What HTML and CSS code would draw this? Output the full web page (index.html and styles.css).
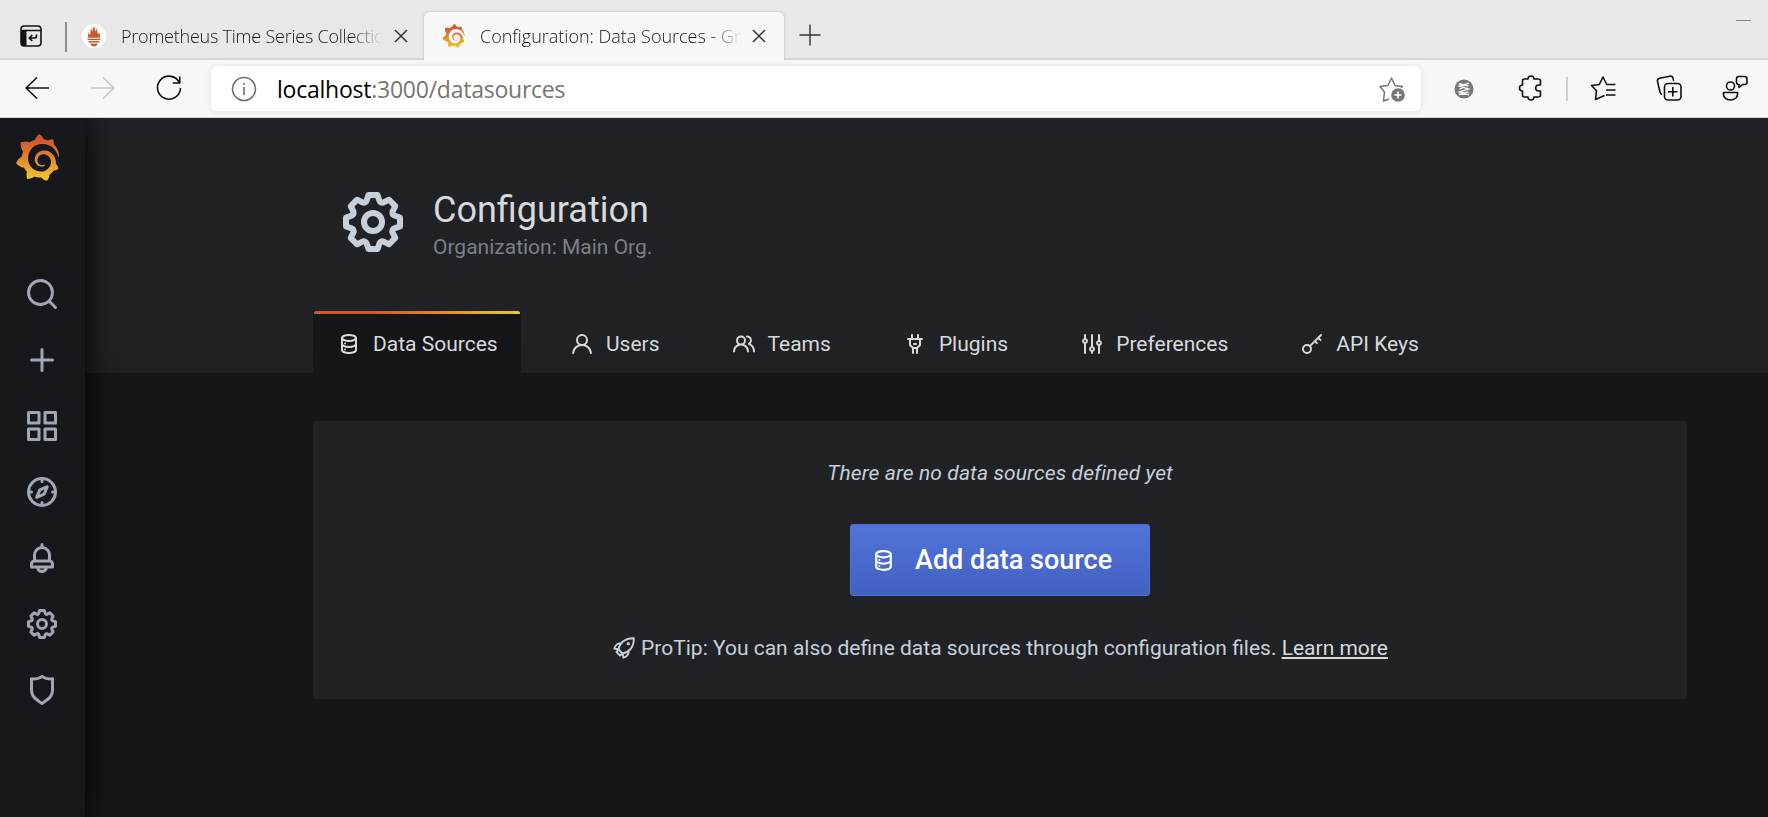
FILE: index.html
```html
<!DOCTYPE html>
<html lang="en">
<head>
<meta charset="utf-8">
<title>Configuration: Data Sources - Grafana</title>
<link rel="stylesheet" href="styles.css">
</head>
<body>
<svg class="defs" aria-hidden="true">
  <defs>
    <linearGradient id="flame" x1="0" y1="1" x2="0" y2="0">
      <stop offset="0" stop-color="#f2cc2e"/><stop offset=".12" stop-color="#efba30"/><stop offset=".5" stop-color="#de8431"/><stop offset=".85" stop-color="#d2592f"/><stop offset="1" stop-color="#d2592f"/>
    </linearGradient>
    <symbol id="grafana" viewBox="0 0 351 365"><path fill="url(#flame)" d="M342,161.2c-0.6-6.1-1.6-13.1-3.6-20.9c-2-7.7-5-16.2-9.4-25c-4.4-8.8-10.1-17.9-17.5-26.8c-2.9-3.5-6.1-6.9-9.5-10.2c5.1-20.3-6.2-37.9-6.2-37.9c-19.5-1.2-31.9,6.1-36.5,9.4c-0.8-0.3-1.5-0.7-2.3-1c-3.3-1.3-6.7-2.6-10.3-3.7c-3.5-1.1-7.1-2.1-10.8-3c-3.7-0.9-7.4-1.6-11.2-2.2c-0.7-0.1-1.3-0.2-2-0.3c-8.5-27.2-32.9-38.6-32.9-38.6c-27.3,17.3-32.4,41.5-32.4,41.5s-0.1,0.5-0.3,1.4c-1.5,0.4-3,0.9-4.5,1.3c-2.1,0.6-4.2,1.4-6.2,2.2c-2.1,0.8-4.1,1.6-6.2,2.5c-4.1,1.8-8.2,3.8-12.2,6c-3.9,2.2-7.7,4.6-11.4,7.1c-0.5-0.2-1-0.4-1-0.4c-37.8-14.4-71.3,2.9-71.3,2.9c-3.1,40.2,15.1,65.5,18.7,70.1c-0.9,2.5-1.7,5-2.5,7.5c-2.8,9.1-4.9,18.4-6.2,28.1c-0.2,1.4-0.4,2.8-0.5,4.2C18.8,192.7,8.5,228,8.5,228c29.1,33.5,63.1,35.6,63.1,35.6c0,0,0.1-0.1,0.1-0.1c4.3,7.7,9.3,15,14.9,21.9c2.4,2.9,4.8,5.6,7.4,8.3c-10.6,30.4,1.5,55.6,1.5,55.6c32.4,1.2,53.7-14.2,58.2-17.7c3.2,1.1,6.5,2.1,9.8,2.9c10,2.6,20.2,4.1,30.4,4.5c2.5,0.1,5.1,0.2,7.6,0.1l1.2,0l0.8,0l1.6,0l1.6-0.1l0,0.1c15.3,21.8,42.1,24.9,42.1,24.9c19.1-20.1,20.2-40.1,20.2-44.4l0,0c0,0,0-0.1,0-0.3c0-0.4,0-0.6,0-0.6l0,0c0-0.3,0-0.6,0-0.9c4-2.8,7.8-5.8,11.4-9.1c7.6-6.9,14.3-14.8,19.9-23.3c0.5-0.8,1-1.6,1.5-2.4c21.6,1.2,36.9-13.4,36.9-13.4c-3.6-22.5-16.4-33.5-19.1-35.6l0,0c0,0-0.1-0.1-0.3-0.2c-0.2-0.1-0.2-0.2-0.2-0.2c0,0,0,0,0,0c-0.1-0.1-0.3-0.2-0.5-0.3c0.1-1.4,0.2-2.7,0.3-4.1c0.2-2.4,0.2-4.9,0.2-7.3l0-1.8l0-0.9l0-0.5c0-0.6,0-0.4,0-0.6l-0.1-1.5l-0.1-2c0-0.7-0.1-1.3-0.2-1.9c-0.1-0.6-0.1-1.3-0.2-1.9l-0.2-1.9l-0.3-1.9c-0.4-2.5-0.8-4.9-1.4-7.4c-2.3-9.7-6.1-18.9-11-27.2c-5-8.3-11.2-15.6-18.3-21.8c-7-6.2-14.9-11.2-23.1-14.9c-8.3-3.7-16.9-6.1-25.5-7.2c-4.3-0.6-8.6-0.8-12.9-0.7l-1.6,0l-0.4,0c-0.1,0-0.6,0-0.5,0l-0.7,0l-1.6,0.1c-0.6,0-1.2,0.1-1.7,0.1c-2.2,0.2-4.4,0.5-6.5,0.9c-8.6,1.6-16.7,4.7-23.8,9c-7.1,4.3-13.3,9.6-18.3,15.6c-5,6-8.9,12.7-11.6,19.6c-2.7,6.9-4.2,14.1-4.6,21c-0.1,1.7-0.1,3.5-0.1,5.2c0,0.4,0,0.9,0,1.3l0.1,1.4c0.1,0.8,0.1,1.7,0.2,2.5c0.3,3.5,1,6.9,1.9,10.1c1.9,6.5,4.9,12.4,8.6,17.4c3.7,5,8.2,9.1,12.9,12.4c4.7,3.2,9.8,5.5,14.8,7c5,1.5,10,2.1,14.7,2.1c0.6,0,1.2,0,1.7,0c0.3,0,0.6,0,0.9,0c0.3,0,0.6,0,0.9-0.1c0.5,0,1-0.1,1.5-0.1c0.1,0,0.3,0,0.4-0.1l0.5-0.1c0.3,0,0.6-0.1,0.9-0.1c0.6-0.1,1.1-0.2,1.7-0.3c0.6-0.1,1.1-0.2,1.6-0.4c1.1-0.2,2.1-0.6,3.1-0.9c2-0.7,4-1.5,5.7-2.4c1.8-0.9,3.4-2,5-3c0.4-0.3,0.9-0.6,1.3-1c1.6-1.3,1.9-3.7,0.6-5.3c-1.1-1.4-3.1-1.8-4.7-0.9c-0.4,0.2-0.8,0.4-1.2,0.6c-1.4,0.7-2.8,1.3-4.3,1.8c-1.5,0.5-3.1,0.9-4.7,1.2c-0.8,0.1-1.6,0.2-2.5,0.3c-0.4,0-0.8,0.1-1.3,0.1c-0.4,0-0.9,0-1.2,0c-0.4,0-0.8,0-1.2,0c-0.5,0-1,0-1.5-0.1c0,0-0.3,0-0.1,0l-0.2,0l-0.3,0c-0.2,0-0.5,0-0.7-0.1c-0.5-0.1-0.9-0.1-1.4-0.2c-3.7-0.5-7.4-1.6-10.9-3.2c-3.6-1.6-7-3.8-10.1-6.6c-3.1-2.8-5.8-6.1-7.9-9.9c-2.1-3.8-3.6-8-4.3-12.4c-0.3-2.2-0.5-4.5-0.4-6.7c0-0.6,0.1-1.2,0.1-1.8c0,0.2,0-0.1,0-0.1l0-0.2l0-0.5c0-0.3,0.1-0.6,0.1-0.9c0.1-1.2,0.3-2.4,0.5-3.6c1.7-9.6,6.5-19,13.9-26.1c1.9-1.8,3.9-3.4,6-4.9c2.1-1.5,4.4-2.8,6.8-3.9c2.4-1.1,4.8-2,7.4-2.7c2.5-0.7,5.1-1.1,7.8-1.4c1.3-0.1,2.6-0.2,4-0.2c0.4,0,0.6,0,0.9,0l1.1,0l0.7,0c0.3,0,0,0,0.1,0l0.3,0l1.1,0.1c2.9,0.2,5.7,0.6,8.5,1.3c5.6,1.2,11.1,3.3,16.2,6.1c10.2,5.7,18.9,14.5,24.2,25.1c2.7,5.3,4.6,11,5.5,16.9c0.2,1.5,0.4,3,0.5,4.5l0.1,1.1l0.1,1.1c0,0.4,0,0.8,0,1.1c0,0.4,0,0.8,0,1.1l0,1l0,1.1c0,0.7-0.1,1.9-0.1,2.6c-0.1,1.6-0.3,3.3-0.5,4.9c-0.2,1.6-0.5,3.2-0.8,4.8c-0.3,1.6-0.7,3.2-1.1,4.7c-0.8,3.1-1.8,6.2-3,9.3c-2.4,6-5.6,11.8-9.4,17.1c-7.7,10.6-18.2,19.2-30.2,24.7c-6,2.7-12.3,4.7-18.8,5.7c-3.2,0.6-6.5,0.9-9.8,1l-0.6,0l-0.5,0l-1.1,0l-1.6,0l-0.8,0c0.4,0-0.1,0-0.1,0l-0.3,0c-1.8,0-3.5-0.1-5.3-0.3c-7-0.5-13.9-1.8-20.7-3.7c-6.7-1.9-13.2-4.6-19.4-7.8c-12.3-6.6-23.4-15.6-32-26.5c-4.3-5.4-8.1-11.3-11.2-17.4c-3.1-6.1-5.6-12.6-7.4-19.1c-1.8-6.6-2.9-13.3-3.4-20.1l-0.1-1.3l0-0.3l0-0.3l0-0.6l0-1.1l0-0.3l0-0.4l0-0.8l0-1.6l0-0.3c0,0,0,0.1,0-0.1l0-0.6c0-0.8,0-1.7,0-2.5c0.1-3.3,0.4-6.8,0.8-10.2c0.4-3.4,1-6.9,1.7-10.3c0.7-3.4,1.5-6.8,2.5-10.2c1.9-6.7,4.3-13.2,7.1-19.3c5.7-12.2,13.1-23.1,22-31.8c2.2-2.2,4.5-4.2,6.9-6.2c2.4-1.9,4.9-3.7,7.5-5.4c2.5-1.7,5.2-3.2,7.9-4.6c1.3-0.7,2.7-1.4,4.1-2c0.7-0.3,1.4-0.6,2.1-0.9c0.7-0.3,1.4-0.6,2.1-0.9c2.8-1.2,5.7-2.2,8.7-3.1c0.7-0.2,1.5-0.4,2.2-0.7c0.7-0.2,1.5-0.4,2.2-0.6c1.5-0.4,3-0.8,4.5-1.1c0.7-0.2,1.5-0.3,2.3-0.5c0.8-0.2,1.5-0.3,2.3-0.5c0.8-0.1,1.5-0.3,2.3-0.4l1.1-0.2l1.2-0.2c0.8-0.1,1.5-0.2,2.3-0.3c0.9-0.1,1.7-0.2,2.6-0.3c0.7-0.1,1.9-0.2,2.6-0.3c0.5-0.1,1.1-0.1,1.6-0.2l1.1-0.1l0.5-0.1l0.6,0c0.9-0.1,1.7-0.1,2.6-0.2l1.3-0.1c0,0,0.5,0,0.1,0l0.3,0l0.6,0c0.7,0,1.5-0.1,2.2-0.1c2.9-0.1,5.9-0.1,8.8,0c5.8,0.2,11.5,0.9,17,1.9c11.1,2.1,21.5,5.6,31,10.3c9.5,4.6,17.9,10.3,25.3,16.5c0.5,0.4,0.9,0.8,1.4,1.2c0.4,0.4,0.9,0.8,1.3,1.2c0.9,0.8,1.7,1.6,2.6,2.4c0.9,0.8,1.7,1.6,2.5,2.4c0.8,0.8,1.6,1.6,2.4,2.5c3.1,3.3,6,6.6,8.6,10c5.2,6.7,9.4,13.5,12.7,19.9c0.2,0.4,0.4,0.8,0.6,1.2c0.2,0.4,0.4,0.8,0.6,1.2c0.4,0.8,0.8,1.6,1.1,2.4c0.4,0.8,0.7,1.5,1.1,2.3c0.3,0.8,0.7,1.5,1,2.3c1.2,3,2.4,5.9,3.3,8.6c1.5,4.4,2.6,8.3,3.5,11.7c0.3,1.4,1.6,2.3,3,2.1c1.5-0.1,2.6-1.3,2.6-2.8C342.6,170.4,342.5,166.1,342,161.2z"/></symbol>
    <symbol id="cog" viewBox="0 0 24 24"><path d="M21.32,9.55l-1.89-.63.89-1.78A1,1,0,0,0,20.13,6L18,3.87a1,1,0,0,0-1.15-.19l-1.78.89-.63-1.89A1,1,0,0,0,13.5,2h-3a1,1,0,0,0-.95.68L8.92,4.57,7.14,3.68A1,1,0,0,0,6,3.87L3.87,6a1,1,0,0,0-.19,1.15l.89,1.78-1.89.63A1,1,0,0,0,2,10.5v3a1,1,0,0,0,.68.95l1.89.63-.89,1.78A1,1,0,0,0,3.87,18L6,20.13a1,1,0,0,0,1.15.19l1.78-.89.63,1.89a1,1,0,0,0,.95.68h3a1,1,0,0,0,.95-.68l.63-1.89,1.78.89A1,1,0,0,0,18,20.13L20.13,18a1,1,0,0,0,.19-1.15l-.89-1.78,1.89-.63A1,1,0,0,0,22,13.5v-3A1,1,0,0,0,21.32,9.55ZM20,12.78l-1.2.4A2,2,0,0,0,17.64,16l.57,1.14-1.1,1.1L16,17.64a2,2,0,0,0-2.79,1.16l-.4,1.2H11.22l-.4-1.2A2,2,0,0,0,8,17.64l-1.14.57-1.1-1.1L6.36,16A2,2,0,0,0,5.2,13.18L4,12.78V11.22l1.2-.4A2,2,0,0,0,6.36,8L5.79,6.89l1.1-1.1L8,6.36A2,2,0,0,0,10.82,5.2l.4-1.2h1.56l.4,1.2A2,2,0,0,0,16,6.36l1.14-.57,1.1,1.1L17.64,8a2,2,0,0,0,1.16,2.79l1.2.4ZM12,8a4,4,0,1,0,4,4A4,4,0,0,0,12,8Zm0,6a2,2,0,1,1,2-2A2,2,0,0,1,12,14Z"/></symbol>
    <symbol id="database" viewBox="0 0 24 24"><path d="M8,16.5a1,1,0,1,0,1,1A1,1,0,0,0,8,16.5ZM12,2C8,2,4,3.37,4,6V18c0,2.63,4,4,8,4s8-1.37,8-4V6C20,3.37,16,2,12,2Zm6,16c0,.71-2.28,2-6,2s-6-1.29-6-2V14.73A13.16,13.16,0,0,0,12,16a13.16,13.16,0,0,0,6-1.27Zm0-6c0,.71-2.28,2-6,2s-6-1.29-6-2V8.73A13.16,13.16,0,0,0,12,10a13.16,13.16,0,0,0,6-1.27ZM12,8C8.28,8,6,6.71,6,6s2.28-2,6-2,6,1.29,6,2S15.72,8,12,8ZM8,10.5a1,1,0,1,0,1,1A1,1,0,0,0,8,10.5Z"/></symbol>
  </defs>
</svg>

<div class="browser">
  <div class="tabstrip">
    <svg class="tab-menu" viewBox="0 0 22 22"><rect x="1" y="1" width="20" height="20" rx="3.2" fill="none" stroke="#111" stroke-width="1.6"/><path d="M1 5.5h20M5.8 5.5v15" fill="none" stroke="#111" stroke-width="1.4"/><path d="M1 5.5h5v15.400H4a3 3 0 0 1-3-3z" fill="#111"/><path d="M16.500 9.500v1.500a2 2 0 0 1-2 2H9.500m2.800-3-3 3 3 3" fill="none" stroke="#111" stroke-width="1.7"/></svg>
    <span class="strip-divider"></span>
    <div class="tab">
      <svg class="prom" viewBox="0 0 24 24"><circle cx="12" cy="12" r="12" fill="#fff"/><path fill="#c75a30" d="M5 14.200c2 .7 12 .7 14 0-.2.800-.7 1.300-1.400 1.800H6.400c-.7-.5-1.200-1-1.400-1.800zM6.500 17h11v1.600h-11zM8.200 19.600h7.600c-.5 1.900-2 3-3.800 3s-3.300-1.100-3.800-3zM6.500 13.700c-1.300-2.200 0-3.500.3-5.500.8 1 .6 2 1.200 2.800.9-2.600.2-4.600 1.300-7 .6 1.200.2 2.400 1 3.500.7-1.700.6-3.600 1.700-5.500.9 2 .8 3.700 1.600 5.500.6-1 .5-2.300 1-3.200 1 2 .5 4.300 1.500 6.500.5-.8.500-1.700 1.100-2.500.4 1.900 1.600 3.200.3 5.400z"/></svg>
      <span class="tab-title tight">Prometheus Time Series Collection</span>
      <svg class="close" viewBox="0 0 14 14"><path d="M1 1l12 12M13 1L1 13"/></svg>
    </div>
    <div class="tab active">
      <svg class="fav"><use href="#grafana"/></svg>
      <span class="tab-title">Configuration: Data Sources - Grafana</span>
      <svg class="close" viewBox="0 0 14 14"><path d="M1 1l12 12M13 1L1 13"/></svg>
    </div>
    <svg class="newtab" viewBox="0 0 22 22"><path d="M11 .5v21M.5 11h21"/></svg>
    <span class="minimize"></span>
  </div>
  <div class="toolbar">
    <svg class="tb back" viewBox="0 0 26 26"><path d="M25 13H2M13 2.500L2 13l11 10.500"/></svg>
    <svg class="tb fwd" viewBox="0 0 26 26"><path d="M1 13h23M13 2.500L24 13 13 23.500"/></svg>
    <svg class="tb reload" viewBox="0 0 26 26"><path d="M23.500 8A11.500 11.500 0 1 0 24.500 13M23.800 1.500V8h-7"/></svg>
    <div class="address">
      <svg class="info" viewBox="0 0 26 26"><circle cx="13" cy="13" r="11.500"/><path d="M13 11v8M13 7v2"/></svg>
      <span class="url"><b>localhost</b>:3000/datasources</span>
      <svg class="addfav" viewBox="0 0 26 26"><path d="M10 23l-5.500 2 1-9L1 10.500l8-1L12.500 2l3.500 7.500 7.500 1L22 12" fill="none" stroke="#767676" stroke-width="1.500" stroke-linejoin="round"/><circle cx="19" cy="19" r="6.800" fill="#767676"/><path d="M19 15.500v7M15.500 19h7" stroke="#fff" stroke-width="1.600"/></svg>
    </div>
    <svg class="ext" viewBox="0 0 20 20"><circle cx="10" cy="10" r="9.500" fill="#767676"/><path d="M15 4.200L5.500 7l9 3-9 3 9.500 2.800M5 4.800L14.500 7M5.500 10l3-1M11.500 11l3-1M5 15.500l9.500-2.500" fill="none" stroke="#f7f7f7" stroke-width="1.500"/></svg>
    <svg class="tb puzzle" viewBox="0 0 26 26"><path d="M6.500 4H10a3 3 0 0 1 6 0h4.500q2 0 2 2v4h-1.800a3 3 0 0 0 0 6h1.800v4q0 2-2 2H16a3 3 0 0 1-6 0H6.500q-2 0-2-2V16a3 3 0 0 1 0-6V6q0-2 2-2z"/></svg>
    <span class="tb-divider"></span>
    <svg class="tb favs" viewBox="0 0 26 26"><path d="M14.500 20.500L5.500 24.500l1-8.700L1.500 10.500l7.800-1L13 2l3.700 7.500h8.800M16 15h9.500M16 20h9.500"/></svg>
    <svg class="tb colls" viewBox="0 0 26 26"><rect x="8.500" y="8.500" width="16.500" height="16.500" rx="3.500"/><path d="M16.800 12v9.500M12 16.800h9.500M6 19.500q-1.500-.5-2-2.500L1.500 6.500Q1 4 3.500 3.200L14 1.200q2.500-.5 3 2l.6 2.500"/></svg>
    <svg class="tb profile" viewBox="0 0 26 26"><circle cx="8.500" cy="11" r="4"/><path d="M1.500 17.500h14v2c0 3-3 5.500-7 5.500s-7-2.500-7-5.500zM16.500 1.500h6q2.500 0 2.500 2.500v3.500q0 2-2.500 2h-2l-3.500 3V9.500q-2.500 0-2.500-2V4q0-2.500 2-2.500z"/></svg>
  </div>
</div>

<div class="app">
  <nav class="sidebar">
    <svg class="logo"><use href="#grafana"/></svg>
    <div class="side-items">
      <svg viewBox="0 0 24 24"><path d="M21.710,20.290,18,16.610A9,9,0,1,0,16.610,18l3.680,3.680a1,1,0,0,0,1.420,0A1,1,0,0,0,21.710,20.290ZM11,18a7,7,0,1,1,7-7A7,7,0,0,1,11,18Z"/></svg>
      <svg viewBox="0 0 24 24"><path d="M19,11H13V5a1,1,0,0,0-2,0v6H5a1,1,0,0,0,0,2h6v6a1,1,0,0,0,2,0V13h6a1,1,0,0,0,0-2Z"/></svg>
      <svg viewBox="0 0 24 24"><path d="M10,13H3a1,1,0,0,0-1,1v7a1,1,0,0,0,1,1h7a1,1,0,0,0,1-1V14A1,1,0,0,0,10,13ZM9,20H4V15H9ZM21,2H14a1,1,0,0,0-1,1v7a1,1,0,0,0,1,1h7a1,1,0,0,0,1-1V3A1,1,0,0,0,21,2ZM20,9H15V4h5Zm1,4H14a1,1,0,0,0-1,1v7a1,1,0,0,0,1,1h7a1,1,0,0,0,1-1V14A1,1,0,0,0,21,13Zm-1,7H15V15h5ZM10,2H3A1,1,0,0,0,2,3v7a1,1,0,0,0,1,1h7a1,1,0,0,0,1-1V3A1,1,0,0,0,10,2ZM9,9H4V4H9Z"/></svg>
      <svg viewBox="0 0 24 24"><path d="M12,2A10,10,0,1,0,22,12,10,10,0,0,0,12,2Zm1,17.930V19a1,1,0,0,0-2,0v.930A8,8,0,0,1,4.070,13H5a1,1,0,0,0,0-2H4.070A8,8,0,0,1,11,4.070V5a1,1,0,0,0,2,0V4.070A8,8,0,0,1,19.930,11H19a1,1,0,0,0,0,2h.930A8,8,0,0,1,13,19.930ZM15.140,7.550l-5,2.120a1,1,0,0,0-.520.520l-2.120,5a1,1,0,0,0,.210,1.100,1,1,0,0,0,.700.290.930.930,0,0,0,.400-.090l5-2.120a1,1,0,0,0,.520-.520l2.120-5a1,1,0,0,0-1.310-1.310Zm-2.490,5.100-2.280,1,1-2.280,2.280-1Z"/></svg>
      <svg viewBox="0 0 24 24"><path d="M18,13.180V10a6,6,0,0,0-5-5.910V3a1,1,0,0,0-2,0V4.090A6,6,0,0,0,6,10v3.180A3,3,0,0,0,4,16v2a1,1,0,0,0,1,1H8.140a4,4,0,0,0,7.720,0H19a1,1,0,0,0,1-1V16A3,3,0,0,0,18,13.180ZM8,10a4,4,0,0,1,8,0v3H8Zm4,10a2,2,0,0,1-1.720-1h3.440A2,2,0,0,1,12,20Zm6-3H6V16a1,1,0,0,1,1-1H17a1,1,0,0,1,1,1Z"/></svg>
      <svg><use href="#cog"/></svg>
      <svg viewBox="0 0 24 24"><path d="M19.630,3.650a1,1,0,0,0-.840-.200,8,8,0,0,1-6.220-1.270,1,1,0,0,0-1.140,0A8,8,0,0,1,5.210,3.450a1,1,0,0,0-.840.200A1,1,0,0,0,4,4.430v7.450a9,9,0,0,0,3.770,7.330l3.650,2.600a1,1,0,0,0,1.160,0l3.650-2.600A9,9,0,0,0,20,11.880V4.430A1,1,0,0,0,19.630,3.650ZM18,11.880a7,7,0,0,1-2.930,5.700L12,19.770,8.930,17.580A7,7,0,0,1,6,11.880V5.580a10,10,0,0,0,6-1.390,10,10,0,0,0,6,1.390Z"/></svg>
    </div>
  </nav>
  <main class="main">
    <header class="page-header">
      <div class="heading">
        <svg class="heading-icon"><use href="#cog"/></svg>
        <div class="heading-text">
          <h1>Configuration</h1>
          <p>Organization: Main Org.</p>
        </div>
      </div>
      <div class="nav-tabs">
        <a class="nav-tab current"><svg><use href="#database"/></svg><span>Data Sources</span></a>
        <a class="nav-tab"><svg viewBox="0 0 24 24"><path d="M15.710,12.710a6,6,0,1,0-7.420,0,10,10,0,0,0-6.220,8.180,1,1,0,0,0,2,.220,8,8,0,0,1,15.900,0,1,1,0,0,0,1,.890h.110a1,1,0,0,0,.880-1.100A10,10,0,0,0,15.710,12.710ZM12,12a4,4,0,1,1,4-4A4,4,0,0,1,12,12Z"/></svg><span>Users</span></a>
        <a class="nav-tab"><svg viewBox="0 0 24 24"><path d="M12.300,12.220A4.920,4.920,0,0,0,14,8.500a5,5,0,0,0-10,0,4.920,4.920,0,0,0,1.700,3.720A8,8,0,0,0,1,19.500a1,1,0,0,0,2,0,6,6,0,0,1,12,0,1,1,0,0,0,2,0A8,8,0,0,0,12.300,12.220ZM9,11.500a3,3,0,1,1,3-3A3,3,0,0,1,9,11.500Zm9.740.320A5,5,0,0,0,15,3.500a1,1,0,0,0,0,2,3,3,0,0,1,3,3,3,3,0,0,1-1.500,2.590,1,1,0,0,0-.500.840,1,1,0,0,0,.450.860l.390.260.130.070a7,7,0,0,1,4,6.380,1,1,0,0,0,2,0A9,9,0,0,0,18.740,11.820Z"/></svg><span>Teams</span></a>
        <a class="nav-tab"><svg viewBox="0 0 24 24"><path d="M19,6H16V3a1,1,0,0,0-2,0V6H10V3A1,1,0,0,0,8,3V6H5A1,1,0,0,0,5,8H6v5a1,1,0,0,0,.290.710L9,16.410V21a1,1,0,0,0,2,0V17h2v4a1,1,0,0,0,2,0V16.410l2.710-2.700A1,1,0,0,0,18,13V8h1a1,1,0,0,0,0-2Zm-3,6.590L13.590,15H10.410L8,12.590V8h8ZM11,13h2a1,1,0,0,0,0-2H11a1,1,0,0,0,0,2Z"/></svg><span>Plugins</span></a>
        <a class="nav-tab"><svg viewBox="0 0 24 24"><path d="M20,8.180V3a1,1,0,0,0-2,0V8.180a3,3,0,0,0,0,5.640V21a1,1,0,0,0,2,0V13.820a3,3,0,0,0,0-5.640ZM19,12a1,1,0,1,1,1-1A1,1,0,0,1,19,12Zm-6,2.180V3a1,1,0,0,0-2,0V14.180a3,3,0,0,0,0,5.640V21a1,1,0,0,0,2,0V19.820a3,3,0,0,0,0-5.640ZM12,18a1,1,0,1,1,1-1A1,1,0,0,1,12,18ZM6,6.180V3A1,1,0,0,0,4,3V6.180a3,3,0,0,0,0,5.640V21a1,1,0,0,0,2,0V11.820A3,3,0,0,0,6,6.180ZM5,10A1,1,0,1,1,6,9,1,1,0,0,1,5,10Z"/></svg><span>Preferences</span></a>
        <a class="nav-tab"><svg class="line" viewBox="0 0 24 24"><circle cx="7" cy="17" r="4"/><path d="M9.900 14.100L21 3M18.200 5.800l2.400 2.400M14.900 9.100l2 2"/></svg><span>API Keys</span></a>
      </div>
    </header>
    <section class="panel">
      <p class="empty">There are no data sources defined yet</p>
      <a class="button"><svg><use href="#database"/></svg><span>Add data source</span></a>
      <p class="protip"><svg class="line" viewBox="0 0 24 24"><path d="M6.500 13.500C7.500 7 13 2 21.800 2.200c.4 8.500-4.500 14-11.300 15.300zM9.500 7.500C5.500 6.800 3.500 9 2.300 12.500l4.200 1M16.500 14.500c.7 4-1.500 6-5 7.200l-1-4.200M6.500 13.500L4.500 16l3.500 3.500 2.500-2"/><circle cx="16.300" cy="7.700" r=".7"/></svg><span>ProTip: You can also define data sources through configuration files. <u>Learn more</u></span></p>
    </section>
  </main>
</div>
</body>
</html>
```
FILE: styles.css
```css
* { box-sizing: border-box; }
body { margin: 0; width: 1768px; height: 817px; overflow: hidden; display: flex; flex-direction: column; background: #141619; font-family: Roboto, "Liberation Sans", sans-serif; }
h1, p { margin: 0; font-weight: 400; }
svg { display: block; flex: none; overflow: visible; }
.defs { position: absolute; width: 0; height: 0; }

.browser { flex: none; height: 118px; background: #f7f7f7; border-bottom: 1px solid #d3d6d5; font-family: "Open Sans", "Noto Sans", sans-serif; }
.tabstrip { height: 60px; display: flex; align-items: flex-start; background: #e8e8e8; box-shadow: inset 0 -2px #d6d6d6; }
.tab-menu { width: 22px; height: 22px; margin: 25px 0 0 20px; }
.strip-divider { width: 2px; height: 30px; margin: 22px 0 0 23px; background: #8c8c8c; }
.tab { width: 357px; height: 48px; margin-top: 12px; padding-left: 15px; display: flex; align-items: center; }
.tab.active { width: 360px; padding-left: 17px; background: #f7f7f7; border-radius: 6px 6px 0 0; box-shadow: 0 0 3px rgba(0,0,0,.22); clip-path: inset(-4px -4px 0 -4px); }
.prom { width: 24px; height: 24px; }
.fav { width: 23px; height: 24px; margin-left: 1px; }
.tab-title { width: 261px; margin-left: 15px; overflow: hidden; white-space: nowrap; font-size: 18px; font-weight: 300; line-height: 26px; color: #1a1a1a; -webkit-mask-image: linear-gradient(90deg, #000 88%, transparent 100%); mask-image: linear-gradient(90deg, #000 88%, transparent 100%); }
.tight { letter-spacing: -.23px; }
.close { width: 14px; height: 14px; margin-left: 12px; fill: none; stroke: #333; stroke-width: 1.5; }
.active .close { margin-left: 11px; }
.newtab { width: 22px; height: 22px; margin: 24px 0 0 15px; fill: none; stroke: #333; stroke-width: 1.4; }
.minimize { width: 15px; height: 1px; margin: 20px 17px 0 auto; background: #888; }
.toolbar { height: 57px; display: flex; align-items: center; }
.tb { width: 26px; height: 26px; margin-bottom: 2px; fill: none; stroke: #111; stroke-width: 1.6; stroke-linejoin: round; }
.back { margin-left: 24px; }
.fwd { margin-left: 40px; stroke: #c9c9c9; }
.reload { margin-left: 40px; }
.address { width: 1210px; height: 45px; margin-left: 29px; padding: 0 16px 0 20px; display: flex; align-items: center; background: #fff; border-radius: 6px; box-shadow: 0 0 6px rgba(0,0,0,.1); }
.info { width: 26px; height: 26px; fill: none; stroke: #6f6f6f; stroke-width: 1.6; }
.url { margin-left: 20px; flex: 1; font-size: 23px; line-height: 32px; letter-spacing: -.24px; color: #757575; white-space: nowrap; }
.url b { font-weight: 400; color: #000; }
.addfav { width: 26px; height: 26px; }
.ext { width: 20px; height: 20px; margin-left: 33px; }
.puzzle { margin-left: 44px; }
.tb-divider { width: 2px; height: 24px; margin-left: 22px; background: #d0d0d0; }
.favs { margin-left: 22px; }
.colls { margin-left: 40px; }
.profile { margin-left: 40px; }

.app { flex: 1; display: flex; min-height: 0; }
.sidebar { position: relative; z-index: 1; width: 85px; background: #17181c; box-shadow: 0 0 30px #000; clip-path: inset(0 -40px 0 0); }
.logo { width: 45px; height: 47px; margin: 16px 0 0 15px; }
.side-items { display: flex; flex-direction: column; gap: 30px; margin: 95px 0 0 24px; fill: #9fa7b3; }
.side-items svg { width: 36px; height: 36px; }
.main { flex: 1; }
.page-header { height: 255px; padding-left: 228px; background: #202226; box-shadow: inset 0 -18px 14px -10px #212121; display: flex; flex-direction: column; justify-content: space-between; }
.heading { display: flex; padding: 68px 0 0 24px; }
.heading-icon { width: 72px; height: 72px; fill: #c7d0d9; }
.heading-text { margin-left: 24px; }
h1 { margin-top: 2px; font-size: 36px; line-height: 44px; color: #d8d9da; }
.heading-text p { font-size: 21px; line-height: 30px; color: #7b8087; }
.nav-tabs { display: flex; gap: 24px; }
.nav-tab { height: 62px; padding: 3px 24px 0; display: flex; align-items: center; gap: 12px; font-size: 21px; color: #d8d9da; white-space: nowrap; }
.nav-tab svg { width: 24px; height: 24px; fill: currentColor; }
svg.line, .nav-tab svg.line { fill: none; stroke: currentColor; stroke-width: 1.9; stroke-linecap: round; stroke-linejoin: round; }
.current { position: relative; width: 208px; margin-right: 1px; background: #141619; }
.current::before { content: ""; position: absolute; inset: 0 1px auto 1px; height: 3px; border-radius: 2px 2px 0 0; background: linear-gradient(90deg, #d05a2e 30%, #f0c830); }
.panel { width: 1374px; height: 278px; margin: 48px 0 0 228px; padding-top: 37px; display: flex; flex-direction: column; align-items: center; background: #202226; border-radius: 4px; color: #c7d0d9; }
.empty { font-size: 21px; line-height: 31px; font-style: italic; letter-spacing: .12px; }
.button { width: 300px; height: 72px; margin-top: 35px; padding-left: 20px; display: flex; align-items: center; gap: 19px; border: 1px solid #4d6fd6; border-radius: 3px; background: linear-gradient(#5274d8, #4161c1); color: #fff; font-size: 27px; font-weight: 500; }
.button svg { width: 25px; height: 25px; fill: #fff; }
.protip { margin-top: 36px; display: flex; align-items: center; gap: 5px; font-size: 21px; line-height: 32px; white-space: nowrap; }
.protip svg { width: 24px; height: 24px; }
.protip u { color: #d8d9da; text-underline-offset: 2px; text-decoration-thickness: 2px; text-decoration-skip-ink: none; }
```
